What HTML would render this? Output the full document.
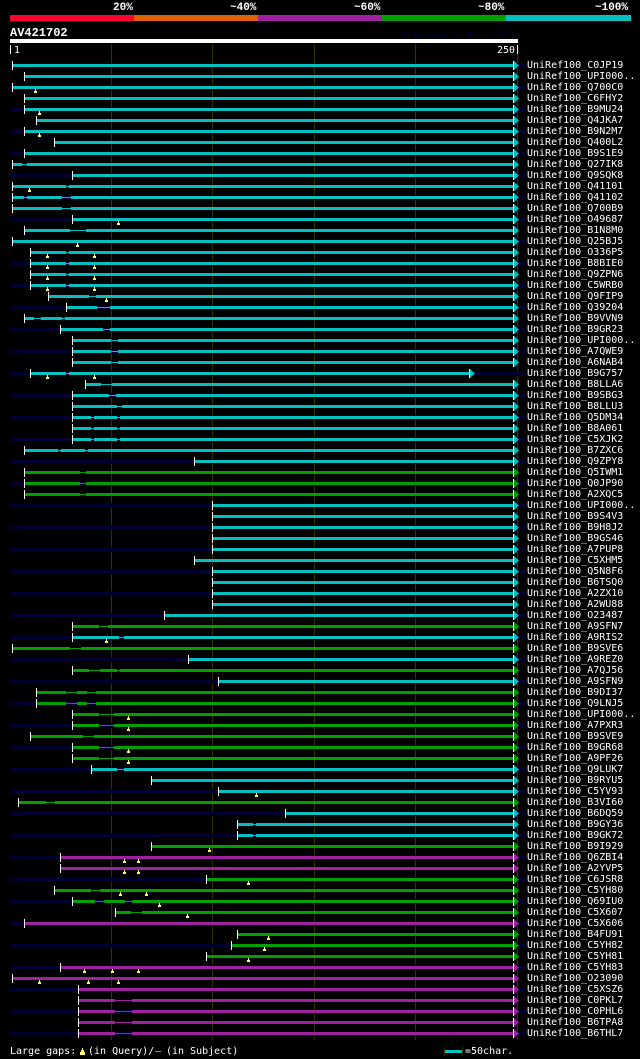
<!DOCTYPE html>
<html><head><meta charset="utf-8"><title>AV421702</title>
<style>
html,body{margin:0;padding:0;background:#000;width:640px;height:1059px;overflow:hidden}
svg{display:block}
text{font-family:"DejaVu Sans Mono","Liberation Mono",monospace;font-size:10px;fill:#fff;stroke:none;white-space:pre}
.t{font-family:"Liberation Mono",monospace;font-weight:bold;font-size:11px}
.c{stroke:#00c0c0;fill:#00c0c0}
.g{stroke:#00a000;fill:#00a000}
.m{stroke:#a020a0;fill:#a020a0}
.b{stroke:none}
.h{stroke-width:1;fill:none}
</style></head><body>
<svg xmlns="http://www.w3.org/2000/svg" width="640" height="1059" viewBox="0 0 640 1059">
<defs>
<g id="n" stroke="none"><rect x="10" y="-2" width="516" height="5" fill="#000"/><rect x="10" y="-1" width="516" height="3" fill="#000030"/></g>
<path id="k" stroke="none" fill="#fff" d="M0-4h1v9h-1z"/>
<path id="y" stroke="none" fill="#ffff66" d="M0 2h1v2h1v2h-3v-2h1z"/>
<g id="a"><path stroke="none" fill="#fff" d="M513-4h1v9h-1z"/><path stroke="none" d="M514-4v9l5-4.500z"/></g>
</defs>
<rect x="10" y="15" width="124" height="6" fill="#ff0033"/>
<rect x="134" y="15" width="124" height="6" fill="#e06000"/>
<rect x="258" y="15" width="124" height="6" fill="#a020a0"/>
<rect x="382" y="15" width="124" height="6" fill="#00a000"/>
<rect x="506" y="15" width="125" height="6" fill="#00c0c0"/>
<text class="t" x="113" y="10">20%</text>
<text class="t" x="230" y="10">~40%</text>
<text class="t" x="354" y="10">~60%</text>
<text class="t" x="478" y="10">~80%</text>
<text class="t" x="595" y="10">~100%</text>
<text class="t" x="10" y="36" style="font-size:12px">AV421702</text>
<text x="402" y="38" style="font-size:8.330px;fill:#000040">AlignView.pm Beta rel.7</text>
<rect x="10" y="39" width="508" height="4" fill="#fff"/>
<rect x="10" y="45" width="1" height="9" fill="#fff"/>
<rect x="517" y="45" width="1" height="9" fill="#fff"/>
<text x="14" y="53">1</text>
<text x="497" y="53">250</text>
<g fill="#333300"><rect x="111" y="44" width="1" height="996"/><rect x="212" y="44" width="1" height="996"/><rect x="314" y="44" width="1" height="996"/><rect x="415" y="44" width="1" height="996"/><rect x="517" y="54" width="1" height="986"/></g>

<g class="c" transform="translate(0 65)"><use href="#n"/><path class="b" d="M13-1H513v3H13z"/><use href="#k" x="12"/><use href="#a"/><text x="527" y="3">UniRef100_C0JP19</text></g>
<g class="c" transform="translate(0 76)"><path class="b" d="M25-1H513v3H25z"/><use href="#k" x="24"/><use href="#a"/><text x="527" y="3">UniRef100_UPI000..</text></g>
<g class="c" transform="translate(0 87)"><use href="#n"/><path class="b" d="M13-1H513v3H13z"/><use href="#k" x="12"/><use href="#a"/><use href="#y" x="35"/><text x="527" y="3">UniRef100_Q700C0</text></g>
<g class="c" transform="translate(0 98)"><path class="b" d="M25-1H513v3H25z"/><use href="#k" x="24"/><use href="#a"/><text x="527" y="3">UniRef100_C6FHY2</text></g>
<g class="c" transform="translate(0 109)"><use href="#n"/><path class="b" d="M25-1H513v3H25z"/><use href="#k" x="24"/><use href="#a"/><use href="#y" x="39"/><text x="527" y="3">UniRef100_B9MU24</text></g>
<g class="c" transform="translate(0 120)"><path class="b" d="M37-1H513v3H37z"/><use href="#k" x="36"/><use href="#a"/><text x="527" y="3">UniRef100_Q4JKA7</text></g>
<g class="c" transform="translate(0 131)"><use href="#n"/><path class="b" d="M25-1H513v3H25z"/><use href="#k" x="24"/><use href="#a"/><use href="#y" x="39"/><text x="527" y="3">UniRef100_B9N2M7</text></g>
<g class="c" transform="translate(0 142)"><path class="b" d="M55-1H513v3H55z"/><use href="#k" x="54"/><use href="#a"/><text x="527" y="3">UniRef100_Q400L2</text></g>
<g class="c" transform="translate(0 153)"><use href="#n"/><path class="b" d="M25-1H513v3H25z"/><use href="#k" x="24"/><use href="#a"/><text x="527" y="3">UniRef100_B9S1E9</text></g>
<g class="c" transform="translate(0 164)"><path class="b" d="M13-1H22v3H13zM27-1H513v3H27z"/><path class="h" d="M22 .5H27"/><use href="#k" x="12"/><use href="#a"/><text x="527" y="3">UniRef100_Q27IK8</text></g>
<g class="c" transform="translate(0 175)"><use href="#n"/><path class="b" d="M73-1H513v3H73z"/><use href="#k" x="72"/><use href="#a"/><text x="527" y="3">UniRef100_Q9SQK8</text></g>
<g class="c" transform="translate(0 186)"><path class="b" d="M13-1H66v3H13zM69-1H513v3H69z"/><path class="h" d="M66 .5H69"/><use href="#k" x="12"/><use href="#a"/><use href="#y" x="29"/><text x="527" y="3">UniRef100_Q41101</text></g>
<g class="c" transform="translate(0 197)"><use href="#n"/><path class="b" d="M13-1H24v3H13zM27-1H62v3H27zM71-1H513v3H71z"/><path class="h" d="M24 .5H27M62 .5H71"/><use href="#k" x="12"/><use href="#a"/><text x="527" y="3">UniRef100_Q41102</text></g>
<g class="c" transform="translate(0 208)"><path class="b" d="M13-1H62v3H13zM71-1H513v3H71z"/><path class="h" d="M62 .5H71"/><use href="#k" x="12"/><use href="#a"/><text x="527" y="3">UniRef100_Q700B9</text></g>
<g class="c" transform="translate(0 219)"><use href="#n"/><path class="b" d="M73-1H513v3H73z"/><use href="#k" x="72"/><use href="#a"/><use href="#y" x="118"/><text x="527" y="3">UniRef100_O49687</text></g>
<g class="c" transform="translate(0 230)"><path class="b" d="M25-1H70v3H25zM86-1H513v3H86z"/><path class="h" d="M70 .5H86"/><use href="#k" x="24"/><use href="#a"/><text x="527" y="3">UniRef100_B1N8M0</text></g>
<g class="c" transform="translate(0 241)"><use href="#n"/><path class="b" d="M13-1H513v3H13z"/><use href="#k" x="12"/><use href="#a"/><use href="#y" x="77"/><text x="527" y="3">UniRef100_Q25BJ5</text></g>
<g class="c" transform="translate(0 252)"><path class="b" d="M31-1H66v3H31zM69-1H513v3H69z"/><path class="h" d="M66 .5H69"/><use href="#k" x="30"/><use href="#a"/><use href="#y" x="47"/><use href="#y" x="94"/><text x="527" y="3">UniRef100_O336P5</text></g>
<g class="c" transform="translate(0 263)"><use href="#n"/><path class="b" d="M31-1H66v3H31zM69-1H513v3H69z"/><path class="h" d="M66 .5H69"/><use href="#k" x="30"/><use href="#a"/><use href="#y" x="47"/><use href="#y" x="94"/><text x="527" y="3">UniRef100_B8BIE0</text></g>
<g class="c" transform="translate(0 274)"><path class="b" d="M31-1H66v3H31zM69-1H513v3H69z"/><path class="h" d="M66 .5H69"/><use href="#k" x="30"/><use href="#a"/><use href="#y" x="47"/><use href="#y" x="94"/><text x="527" y="3">UniRef100_Q9ZPN6</text></g>
<g class="c" transform="translate(0 285)"><use href="#n"/><path class="b" d="M31-1H66v3H31zM69-1H513v3H69z"/><path class="h" d="M66 .5H69"/><use href="#k" x="30"/><use href="#a"/><use href="#y" x="47"/><use href="#y" x="94"/><text x="527" y="3">UniRef100_C5WRB0</text></g>
<g class="c" transform="translate(0 296)"><path class="b" d="M49-1H89v3H49zM96-1H513v3H96z"/><path class="h" d="M89 .5H96"/><use href="#k" x="48"/><use href="#a"/><use href="#y" x="106"/><text x="527" y="3">UniRef100_Q9FIP9</text></g>
<g class="c" transform="translate(0 307)"><use href="#n"/><path class="b" d="M67-1H97v3H67zM110-1H513v3H110z"/><path class="h" d="M97 .5H110"/><use href="#k" x="66"/><use href="#a"/><text x="527" y="3">UniRef100_Q39204</text></g>
<g class="c" transform="translate(0 318)"><path class="b" d="M25-1H34v3H25zM41-1H62v3H41zM65-1H513v3H65z"/><path class="h" d="M34 .5H41M62 .5H65"/><use href="#k" x="24"/><use href="#a"/><text x="527" y="3">UniRef100_B9VVN9</text></g>
<g class="c" transform="translate(0 329)"><use href="#n"/><path class="b" d="M61-1H103v3H61zM110-1H513v3H110z"/><path class="h" d="M103 .5H110"/><use href="#k" x="60"/><use href="#a"/><text x="527" y="3">UniRef100_B9GR23</text></g>
<g class="c" transform="translate(0 340)"><path class="b" d="M73-1H111v3H73zM118-1H513v3H118z"/><path class="h" d="M111 .5H118"/><use href="#k" x="72"/><use href="#a"/><text x="527" y="3">UniRef100_UPI000..</text></g>
<g class="c" transform="translate(0 351)"><use href="#n"/><path class="b" d="M73-1H111v3H73zM118-1H513v3H118z"/><path class="h" d="M111 .5H118"/><use href="#k" x="72"/><use href="#a"/><text x="527" y="3">UniRef100_A7QWE9</text></g>
<g class="c" transform="translate(0 362)"><path class="b" d="M73-1H111v3H73zM118-1H513v3H118z"/><path class="h" d="M111 .5H118"/><use href="#k" x="72"/><use href="#a"/><text x="527" y="3">UniRef100_A6NAB4</text></g>
<g class="c" transform="translate(0 373)"><use href="#n"/><path class="b" d="M31-1H66v3H31zM69-1H469v3H69z"/><path class="h" d="M66 .5H69"/><use href="#k" x="30"/><use href="#a" x="-44"/><use href="#y" x="47"/><use href="#y" x="94"/><text x="527" y="3">UniRef100_B9G757</text></g>
<g class="c" transform="translate(0 384)"><path class="b" d="M86-1H101v3H86zM112-1H513v3H112z"/><path class="h" d="M101 .5H112"/><use href="#k" x="85"/><use href="#a"/><text x="527" y="3">UniRef100_B8LLA6</text></g>
<g class="c" transform="translate(0 395)"><use href="#n"/><path class="b" d="M73-1H109v3H73zM116-1H513v3H116z"/><path class="h" d="M109 .5H116"/><use href="#k" x="72"/><use href="#a"/><text x="527" y="3">UniRef100_B9SBG3</text></g>
<g class="c" transform="translate(0 406)"><path class="b" d="M73-1H117v3H73zM122-1H513v3H122z"/><path class="h" d="M117 .5H122"/><use href="#k" x="72"/><use href="#a"/><text x="527" y="3">UniRef100_B8LLU3</text></g>
<g class="c" transform="translate(0 417)"><use href="#n"/><path class="b" d="M73-1H91v3H73zM94-1H117v3H94zM120-1H513v3H120z"/><path class="h" d="M91 .5H94M117 .5H120"/><use href="#k" x="72"/><use href="#a"/><text x="527" y="3">UniRef100_Q5DM34</text></g>
<g class="c" transform="translate(0 428)"><path class="b" d="M73-1H91v3H73zM94-1H117v3H94zM120-1H513v3H120z"/><path class="h" d="M91 .5H94M117 .5H120"/><use href="#k" x="72"/><use href="#a"/><text x="527" y="3">UniRef100_B8A061</text></g>
<g class="c" transform="translate(0 439)"><use href="#n"/><path class="b" d="M73-1H91v3H73zM94-1H117v3H94zM120-1H513v3H120z"/><path class="h" d="M91 .5H94M117 .5H120"/><use href="#k" x="72"/><use href="#a"/><text x="527" y="3">UniRef100_C5XJK2</text></g>
<g class="c" transform="translate(0 450)"><path class="b" d="M25-1H58v3H25zM61-1H85v3H61zM88-1H513v3H88z"/><path class="h" d="M58 .5H61M85 .5H88"/><use href="#k" x="24"/><use href="#a"/><text x="527" y="3">UniRef100_B7ZXC6</text></g>
<g class="c" transform="translate(0 461)"><use href="#n"/><path class="b" d="M195-1H513v3H195z"/><use href="#k" x="194"/><use href="#a"/><text x="527" y="3">UniRef100_Q9ZPY8</text></g>
<g class="g" transform="translate(0 472)"><path class="b" d="M25-1H80v3H25zM86-1H513v3H86z"/><path class="h" d="M80 .5H86"/><use href="#k" x="24"/><use href="#a"/><text x="527" y="3">UniRef100_Q5IWM1</text></g>
<g class="g" transform="translate(0 483)"><use href="#n"/><path class="b" d="M25-1H80v3H25zM86-1H513v3H86z"/><path class="h" d="M80 .5H86"/><use href="#k" x="24"/><use href="#a"/><text x="527" y="3">UniRef100_Q0JP90</text></g>
<g class="g" transform="translate(0 494)"><path class="b" d="M25-1H80v3H25zM86-1H513v3H86z"/><path class="h" d="M80 .5H86"/><use href="#k" x="24"/><use href="#a"/><text x="527" y="3">UniRef100_A2XQC5</text></g>
<g class="c" transform="translate(0 505)"><use href="#n"/><path class="b" d="M213-1H513v3H213z"/><use href="#k" x="212"/><use href="#a"/><text x="527" y="3">UniRef100_UPI000..</text></g>
<g class="c" transform="translate(0 516)"><path class="b" d="M213-1H513v3H213z"/><use href="#k" x="212"/><use href="#a"/><text x="527" y="3">UniRef100_B9S4V3</text></g>
<g class="c" transform="translate(0 527)"><use href="#n"/><path class="b" d="M213-1H513v3H213z"/><use href="#k" x="212"/><use href="#a"/><text x="527" y="3">UniRef100_B9H8J2</text></g>
<g class="c" transform="translate(0 538)"><path class="b" d="M213-1H513v3H213z"/><use href="#k" x="212"/><use href="#a"/><text x="527" y="3">UniRef100_B9GS46</text></g>
<g class="c" transform="translate(0 549)"><use href="#n"/><path class="b" d="M213-1H513v3H213z"/><use href="#k" x="212"/><use href="#a"/><text x="527" y="3">UniRef100_A7PUP8</text></g>
<g class="c" transform="translate(0 560)"><path class="b" d="M195-1H513v3H195z"/><use href="#k" x="194"/><use href="#a"/><text x="527" y="3">UniRef100_C5XHM5</text></g>
<g class="c" transform="translate(0 571)"><use href="#n"/><path class="b" d="M213-1H513v3H213z"/><use href="#k" x="212"/><use href="#a"/><text x="527" y="3">UniRef100_Q5N8F6</text></g>
<g class="c" transform="translate(0 582)"><path class="b" d="M213-1H513v3H213z"/><use href="#k" x="212"/><use href="#a"/><text x="527" y="3">UniRef100_B6TSQ0</text></g>
<g class="c" transform="translate(0 593)"><use href="#n"/><path class="b" d="M213-1H513v3H213z"/><use href="#k" x="212"/><use href="#a"/><text x="527" y="3">UniRef100_A2ZX10</text></g>
<g class="c" transform="translate(0 604)"><path class="b" d="M213-1H513v3H213z"/><use href="#k" x="212"/><use href="#a"/><text x="527" y="3">UniRef100_A2WU88</text></g>
<g class="c" transform="translate(0 615)"><use href="#n"/><path class="b" d="M165-1H513v3H165z"/><use href="#k" x="164"/><use href="#a"/><text x="527" y="3">UniRef100_O23487</text></g>
<g class="g" transform="translate(0 626)"><path class="b" d="M73-1H99v3H73zM108-1H513v3H108z"/><path class="h" d="M99 .5H108"/><use href="#k" x="72"/><use href="#a"/><text x="527" y="3">UniRef100_A9SFN7</text></g>
<g class="c" transform="translate(0 637)"><use href="#n"/><path class="b" d="M73-1H119v3H73zM124-1H513v3H124z"/><path class="h" d="M119 .5H124"/><use href="#k" x="72"/><use href="#a"/><use href="#y" x="106"/><text x="527" y="3">UniRef100_A9RIS2</text></g>
<g class="g" transform="translate(0 648)"><path class="b" d="M13-1H70v3H13zM81-1H513v3H81z"/><path class="h" d="M70 .5H81"/><use href="#k" x="12"/><use href="#a"/><text x="527" y="3">UniRef100_B9SVE6</text></g>
<g class="c" transform="translate(0 659)"><use href="#n"/><path class="b" d="M189-1H513v3H189z"/><use href="#k" x="188"/><use href="#a"/><text x="527" y="3">UniRef100_A9REZ0</text></g>
<g class="g" transform="translate(0 670)"><path class="b" d="M73-1H89v3H73zM100-1H117v3H100zM120-1H513v3H120z"/><path class="h" d="M89 .5H100M117 .5H120"/><use href="#k" x="72"/><use href="#a"/><text x="527" y="3">UniRef100_A7QJ56</text></g>
<g class="c" transform="translate(0 681)"><use href="#n"/><path class="b" d="M219-1H513v3H219z"/><use href="#k" x="218"/><use href="#a"/><text x="527" y="3">UniRef100_A9SFN9</text></g>
<g class="g" transform="translate(0 692)"><path class="b" d="M37-1H66v3H37zM77-1H87v3H77zM96-1H513v3H96z"/><path class="h" d="M66 .5H77M87 .5H96"/><use href="#k" x="36"/><use href="#a"/><text x="527" y="3">UniRef100_B9DI37</text></g>
<g class="g" transform="translate(0 703)"><use href="#n"/><path class="b" d="M37-1H66v3H37zM77-1H87v3H77zM96-1H513v3H96z"/><path class="h" d="M66 .5H77M87 .5H96"/><use href="#k" x="36"/><use href="#a"/><text x="527" y="3">UniRef100_Q9LNJ5</text></g>
<g class="g" transform="translate(0 714)"><path class="b" d="M73-1H99v3H73zM114-1H513v3H114z"/><path class="h" d="M99 .5H114"/><use href="#k" x="72"/><use href="#a"/><use href="#y" x="128"/><text x="527" y="3">UniRef100_UPI000..</text></g>
<g class="g" transform="translate(0 725)"><use href="#n"/><path class="b" d="M73-1H99v3H73zM114-1H513v3H114z"/><path class="h" d="M99 .5H114"/><use href="#k" x="72"/><use href="#a"/><use href="#y" x="128"/><text x="527" y="3">UniRef100_A7PXR3</text></g>
<g class="g" transform="translate(0 736)"><path class="b" d="M31-1H83v3H31zM94-1H513v3H94z"/><path class="h" d="M83 .5H94"/><use href="#k" x="30"/><use href="#a"/><text x="527" y="3">UniRef100_B9SVE9</text></g>
<g class="g" transform="translate(0 747)"><use href="#n"/><path class="b" d="M73-1H99v3H73zM114-1H513v3H114z"/><path class="h" d="M99 .5H114"/><use href="#k" x="72"/><use href="#a"/><use href="#y" x="128"/><text x="527" y="3">UniRef100_B9GR68</text></g>
<g class="g" transform="translate(0 758)"><path class="b" d="M73-1H99v3H73zM114-1H513v3H114z"/><path class="h" d="M99 .5H114"/><use href="#k" x="72"/><use href="#a"/><use href="#y" x="128"/><text x="527" y="3">UniRef100_A9PF26</text></g>
<g class="c" transform="translate(0 769)"><use href="#n"/><path class="b" d="M92-1H117v3H92zM124-1H513v3H124z"/><path class="h" d="M117 .5H124"/><use href="#k" x="91"/><use href="#a"/><text x="527" y="3">UniRef100_Q9LUK7</text></g>
<g class="c" transform="translate(0 780)"><path class="b" d="M152-1H513v3H152z"/><use href="#k" x="151"/><use href="#a"/><text x="527" y="3">UniRef100_B9RYU5</text></g>
<g class="c" transform="translate(0 791)"><use href="#n"/><path class="b" d="M219-1H513v3H219z"/><use href="#k" x="218"/><use href="#a"/><use href="#y" x="256"/><text x="527" y="3">UniRef100_C5YV93</text></g>
<g class="g" transform="translate(0 802)"><path class="b" d="M19-1H46v3H19zM55-1H513v3H55z"/><path class="h" d="M46 .5H55"/><use href="#k" x="18"/><use href="#a"/><text x="527" y="3">UniRef100_B3VI60</text></g>
<g class="c" transform="translate(0 813)"><use href="#n"/><path class="b" d="M286-1H513v3H286z"/><use href="#k" x="285"/><use href="#a"/><text x="527" y="3">UniRef100_B6DQ59</text></g>
<g class="c" transform="translate(0 824)"><path class="b" d="M238-1H253v3H238zM256-1H513v3H256z"/><path class="h" d="M253 .5H256"/><use href="#k" x="237"/><use href="#a"/><text x="527" y="3">UniRef100_B9GY36</text></g>
<g class="c" transform="translate(0 835)"><use href="#n"/><path class="b" d="M238-1H253v3H238zM256-1H513v3H256z"/><path class="h" d="M253 .5H256"/><use href="#k" x="237"/><use href="#a"/><text x="527" y="3">UniRef100_B9GK72</text></g>
<g class="g" transform="translate(0 846)"><path class="b" d="M152-1H513v3H152z"/><use href="#k" x="151"/><use href="#a"/><use href="#y" x="209"/><text x="527" y="3">UniRef100_B9I929</text></g>
<g class="m" transform="translate(0 857)"><use href="#n"/><path class="b" d="M61-1H513v3H61z"/><use href="#k" x="60"/><use href="#a"/><use href="#y" x="124"/><use href="#y" x="138"/><text x="527" y="3">UniRef100_Q6ZBI4</text></g>
<g class="m" transform="translate(0 868)"><path class="b" d="M61-1H513v3H61z"/><use href="#k" x="60"/><use href="#a"/><use href="#y" x="124"/><use href="#y" x="138"/><text x="527" y="3">UniRef100_A2YVP5</text></g>
<g class="g" transform="translate(0 879)"><use href="#n"/><path class="b" d="M207-1H513v3H207z"/><use href="#k" x="206"/><use href="#a"/><use href="#y" x="248"/><text x="527" y="3">UniRef100_C6JSR8</text></g>
<g class="g" transform="translate(0 890)"><path class="b" d="M55-1H91v3H55zM100-1H513v3H100z"/><path class="h" d="M91 .5H100"/><use href="#k" x="54"/><use href="#a"/><use href="#y" x="120"/><use href="#y" x="146"/><text x="527" y="3">UniRef100_C5YH80</text></g>
<g class="g" transform="translate(0 901)"><use href="#n"/><path class="b" d="M73-1H95v3H73zM104-1H125v3H104zM132-1H513v3H132z"/><path class="h" d="M95 .5H104M125 .5H132"/><use href="#k" x="72"/><use href="#a"/><use href="#y" x="159"/><text x="527" y="3">UniRef100_Q69IU0</text></g>
<g class="g" transform="translate(0 912)"><path class="b" d="M116-1H131v3H116zM142-1H513v3H142z"/><path class="h" d="M131 .5H142"/><use href="#k" x="115"/><use href="#a"/><use href="#y" x="187"/><text x="527" y="3">UniRef100_C5X607</text></g>
<g class="m" transform="translate(0 923)"><use href="#n"/><path class="b" d="M25-1H513v3H25z"/><use href="#k" x="24"/><use href="#a"/><text x="527" y="3">UniRef100_C5X606</text></g>
<g class="g" transform="translate(0 934)"><path class="b" d="M238-1H513v3H238z"/><use href="#k" x="237"/><use href="#a"/><use href="#y" x="268"/><text x="527" y="3">UniRef100_B4FU91</text></g>
<g class="g" transform="translate(0 945)"><use href="#n"/><path class="b" d="M232-1H513v3H232z"/><use href="#k" x="231"/><use href="#a"/><use href="#y" x="264"/><text x="527" y="3">UniRef100_C5YH82</text></g>
<g class="g" transform="translate(0 956)"><path class="b" d="M207-1H513v3H207z"/><use href="#k" x="206"/><use href="#a"/><use href="#y" x="248"/><text x="527" y="3">UniRef100_C5YH81</text></g>
<g class="m" transform="translate(0 967)"><use href="#n"/><path class="b" d="M61-1H513v3H61z"/><use href="#k" x="60"/><use href="#a"/><use href="#y" x="84"/><use href="#y" x="112"/><use href="#y" x="138"/><text x="527" y="3">UniRef100_C5YH83</text></g>
<g class="m" transform="translate(0 978)"><path class="b" d="M13-1H513v3H13z"/><use href="#k" x="12"/><use href="#a"/><use href="#y" x="39"/><use href="#y" x="88"/><use href="#y" x="118"/><text x="527" y="3">UniRef100_O23090</text></g>
<g class="m" transform="translate(0 989)"><use href="#n"/><path class="b" d="M79-1H513v3H79z"/><use href="#k" x="78"/><use href="#a"/><text x="527" y="3">UniRef100_C5XSZ6</text></g>
<g class="m" transform="translate(0 1000)"><path class="b" d="M79-1H115v3H79zM132-1H513v3H132z"/><path class="h" d="M115 .5H132"/><use href="#k" x="78"/><use href="#a"/><text x="527" y="3">UniRef100_C0PKL7</text></g>
<g class="m" transform="translate(0 1011)"><use href="#n"/><path class="b" d="M79-1H115v3H79zM132-1H513v3H132z"/><path class="h" d="M115 .5H132"/><use href="#k" x="78"/><use href="#a"/><text x="527" y="3">UniRef100_C0PHL6</text></g>
<g class="m" transform="translate(0 1022)"><path class="b" d="M79-1H115v3H79zM132-1H513v3H132z"/><path class="h" d="M115 .5H132"/><use href="#k" x="78"/><use href="#a"/><text x="527" y="3">UniRef100_B6TPA8</text></g>
<g class="m" transform="translate(0 1033)"><use href="#n"/><path class="b" d="M79-1H115v3H79zM132-1H513v3H132z"/><path class="h" d="M115 .5H132"/><use href="#k" x="78"/><use href="#a"/><text x="527" y="3">UniRef100_B6THL7</text></g>

<text x="10" y="1054">Large gaps:</text>
<path fill="#ffff66" d="M82 1048h1v2h1v2h1v3h-5v-3h1v-2h1z"/>
<text x="88" y="1054">(in Query)/</text>
<rect x="155" y="1051" width="6" height="1" fill="#00c0c0"/>
<text x="166" y="1054">(in Subject)</text>
<rect x="444" y="1047" width="1" height="9" fill="#333300"/>
<rect x="462" y="1047" width="1" height="9" fill="#333300"/>
<rect x="445" y="1050" width="17" height="3" fill="#00c0c0"/>
<text x="465" y="1054">=50char.</text>
</svg>
</body></html>
